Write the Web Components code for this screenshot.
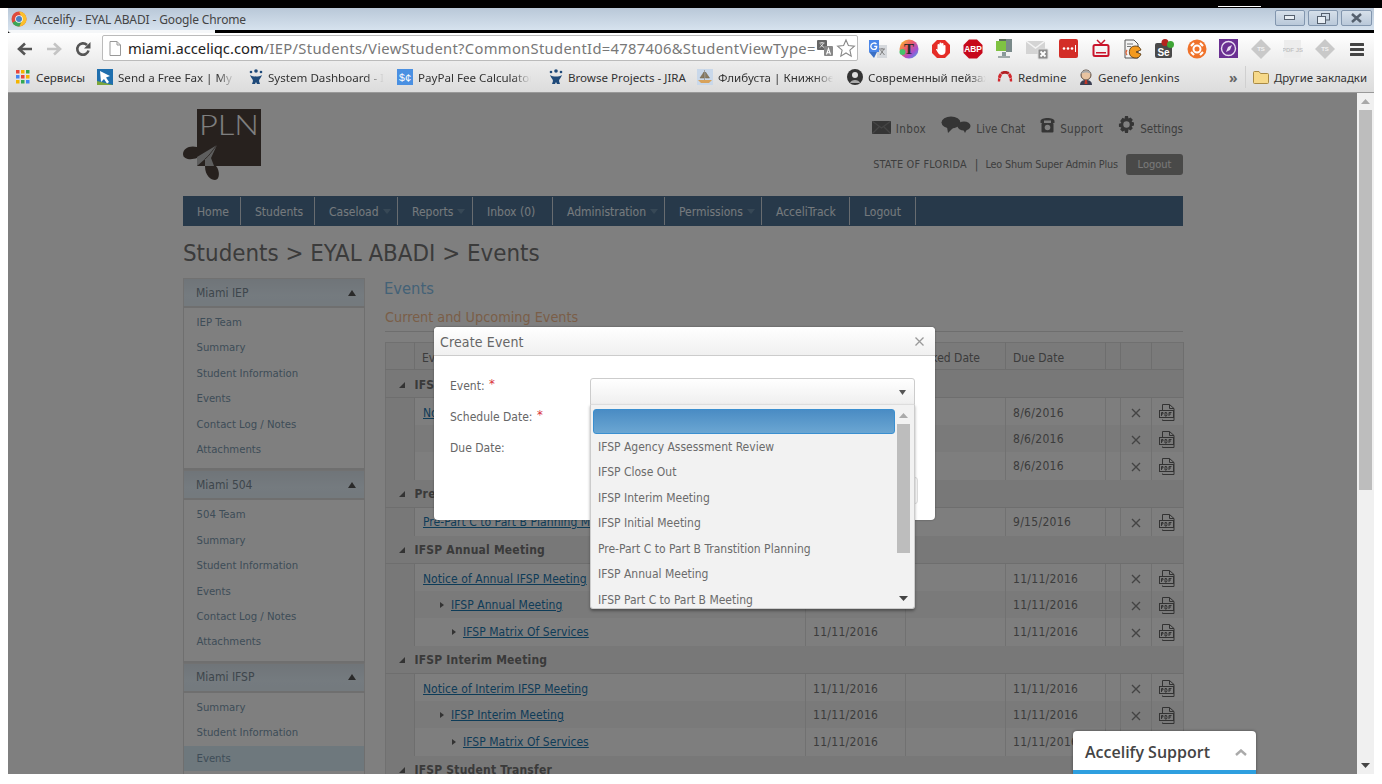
<!DOCTYPE html>
<html lang="en"><head><meta charset="utf-8"><title>Accelify - EYAL ABADI - Google Chrome</title>
<style>
html,body{margin:0;background:#fff;overflow:hidden}
body{font-family:"DejaVu Sans Condensed","DejaVu Sans",sans-serif;font-stretch:condensed;width:1382px;height:784px}
</style></head><body>
<browser-window>
  <chrome-bar slot="chrome"></chrome-bar>
  <site-page>
    <page-header slot="head"></page-header>
    <main-nav slot="head"></main-nav>
    <side-panel slot="side" title="Miami IEP"><side-link>IEP Team</side-link><side-link>Summary</side-link><side-link>Student Information</side-link><side-link>Events</side-link><side-link>Contact Log / Notes</side-link><side-link>Attachments</side-link></side-panel>
    <side-panel slot="side" title="Miami 504"><side-link>504 Team</side-link><side-link>Summary</side-link><side-link>Student Information</side-link><side-link>Events</side-link><side-link>Contact Log / Notes</side-link><side-link>Attachments</side-link></side-panel>
    <side-panel slot="side" title="Miami IFSP"><side-link>Summary</side-link><side-link>Student Information</side-link><side-link active>Events</side-link></side-panel>
    <events-table slot="main"></events-table>
  </site-page>
  <modal-backdrop slot="over"><create-event></create-event></modal-backdrop>
  <support-widget slot="over"></support-widget>
  <page-scrollbar slot="bar"></page-scrollbar>
</browser-window>
<script>
const def=(name,css,html)=>customElements.define(name,class extends HTMLElement{
  connectedCallback(){ if(this.shadowRoot)return;
    this.attachShadow({mode:'open'}).innerHTML=`<style>${css}</style>`+(typeof html==='function'?html(this):html);}
});
const svg=(w,h,body,extra='')=>`<svg xmlns="http://www.w3.org/2000/svg" width="${w}" height="${h}" viewBox="0 0 ${w} ${h}" ${extra}>${body}</svg>`;

/* ---------- browser shell ---------- */
def('browser-window',`
 :host{display:block;width:1382px;height:784px;overflow:hidden;background:#fff}
 .top{height:8px;background:#000;display:flex;align-items:flex-end}
 .top i{display:block;margin-left:1218px;width:43px;height:1px;background:#fff;margin-bottom:1px}
 .win{margin:0 8px;height:766px;display:flex;flex-direction:column}
 .view{flex:1;display:flex;min-height:0}
 .page{flex:1;position:relative;overflow:hidden;min-width:0}
`,`<div class="top"><i></i></div><div class="win"><slot name="chrome"></slot>
  <div class="view"><div class="page"><slot></slot><slot name="over"></slot></div><slot name="bar"></slot></div></div>`);

const winBtn=(g,c='')=>`<span class="wb ${c}">${g}</span>`;
const ICONS=[
 svg(20,20,`<rect x="10" y="6" width="10" height="13" fill="#d5d8dc"/><path d="M2 1h10v12H2z" fill="#4a86e8"/><path d="M2 13h8l-3 6z" fill="#3a6fc4"/><path d="M9.500 5.200A3.200 3.200 0 107.200 10.400c1.500 0 2.500-1 2.500-3H7.200" fill="none" stroke="#fff" stroke-width="1.300"/><path d="M12 10h6M15 9v1M13 16l4-6M13.500 11l4 5" stroke="#777" stroke-width=".9"/>`),
 svg(20,20,`<defs><linearGradient id="rb" x1="0" y1="0" x2="1" y2="1"><stop offset="0" stop-color="#f3d21f"/><stop offset=".4" stop-color="#ef5b6a"/><stop offset=".7" stop-color="#a34fd0"/><stop offset="1" stop-color="#2fb7e8"/></linearGradient></defs><circle cx="10" cy="10" r="9.500" fill="url(#rb)"/><circle cx="3.500" cy="13" r="3" fill="#45c46b"/><text x="10" y="15.200" text-anchor="middle" font-size="15" font-weight="700" fill="#2b2b2b" font-family="Liberation Serif">T</text>`),
 svg(20,20,`<path d="M6 1h8l5 5v8l-5 5H6l-5-5V6z" fill="#e52d27"/><path d="M6.500 11V6a1 1 0 012 0V4.500a1 1 0 012 0V5a1 1 0 012 0v2a1 1 0 012 0v5c0 2.500-1.500 4-4 4-2 0-3-1-4-3L5 10.500c.300-.800 1.500-.500 1.500.500z" fill="#fff"/>`),
 svg(20,20,`<path d="M6 .5h8L19.500 6v8L14 19.500H6L.5 14V6z" fill="#c7081b"/><text x="10" y="13.300" text-anchor="middle" font-size="8.400" font-weight="700" fill="#fff" font-family="Liberation Sans">ABP</text>`),
 svg(20,20,`<g transform="translate(-3 0)"><rect x="7" y="0" width="9" height="2" fill="#5a6a5a"/><rect x="4" y="2" width="14" height="10" fill="#7fc241"/><path d="M14 0h6v13h-6z" fill="#7a8a8a"/><rect x="10" y="13" width="4" height="4" fill="#8a9a9a"/><rect x="6" y="17" width="12" height="2" fill="#a0aaaa"/></g>`),
 svg(24,22,`<rect x="1" y="3" width="19" height="13" fill="#d4d4d4"/><path d="M1 3l9.500 7L20 3" fill="none" stroke="#f4f4f4" stroke-width="1.500"/><rect x="13" y="11" width="10" height="10" rx="1" fill="#8c8c8c" stroke="#ddd"/><path d="M15.500 13.500l5 5m0-5l-5 5" stroke="#fff" stroke-width="1.800"/>`),
 svg(20,20,`<rect x="0" y="0" width="19" height="19" rx="2" fill="#d32d27"/><circle cx="5" cy="9.500" r="1.300" fill="#fff"/><circle cx="9" cy="9.500" r="1.300" fill="#fff"/><circle cx="13" cy="9.500" r="1.300" fill="#fff"/><rect x="16" y="6" width="1" height="7" fill="#fff"/>`),
 svg(20,20,`<path d="M6 1l4 4 4-4" fill="none" stroke="#c9142b" stroke-width="1.500"/><rect x="2.500" y="6" width="15" height="11" rx="1.500" fill="none" stroke="#c9142b" stroke-width="2"/><rect x="5" y="13" width="10" height="1.500" fill="#c9142b"/>`),
 svg(20,20,`<path d="M2 1h9l4 4v14H2z" fill="#f4f4f4" stroke="#555"/><path d="M4 5h6M4 7.500h4" stroke="#777"/><path d="M4 11a4 4 0 000 5" fill="none" stroke="#e0673a" stroke-width="1.300"/><path d="M12 7a6 6 0 106 8l-5-2 5-2a6 6 0 00-6-4z" fill="#f39a1f" stroke="#4a3010" stroke-width=".8"/>`),
 svg(20,20,`<rect x="0" y="4" width="17" height="15" rx="2" fill="#4a4a4a"/><text x="8.500" y="16.500" text-anchor="middle" font-size="10" font-weight="700" fill="#fff" font-family="Liberation Sans">Se</text><circle cx="10" cy="3.500" r="3.500" fill="#b5241e"/><circle cx="15.500" cy="5.500" r="3.500" fill="#3fa535"/>`),
 svg(20,20,`<circle cx="10" cy="10" r="9.500" fill="#f0722a"/><circle cx="10" cy="10" r="3.500" fill="none" stroke="#fff" stroke-width="2"/><path d="M4 7l3-3M13 4l3 3M16 13l-3 3M7 16l-3-3" stroke="#fff" stroke-width="2.200"/>`),
 svg(20,20,`<rect width="19" height="19" fill="#6a2f92"/><circle cx="9.500" cy="9.500" r="7" fill="none" stroke="#e8dcf0" stroke-width="1.400"/><path d="M13 6L11 11l-4 2 2-5z" fill="#e8dcf0"/>`),
 svg(20,20,`<path d="M10 0l10 10-10 10L0 10z" fill="#c9c9c9"/><text x="10" y="12.300" text-anchor="middle" font-size="6" font-weight="700" fill="#f2f2f2" font-family="Liberation Sans">TS</text>`),
 svg(20,20,`<rect x="1" y="1" width="17" height="18" fill="#ededed"/><text x="9.500" y="12.500" text-anchor="middle" font-size="6" font-weight="700" fill="#c4c4c4" font-family="Liberation Sans">PDF JS</text>`),
 svg(20,20,`<path d="M10 0l10 10-10 10L0 10z" fill="#c9c9c9"/><text x="10" y="12.300" text-anchor="middle" font-size="6" font-weight="700" fill="#f2f2f2" font-family="Liberation Sans">TS</text>`),
 svg(16,16,`<rect x="1" y="2" width="14" height="3" rx=".5" fill="#444"/><rect x="1" y="7" width="14" height="3" rx=".5" fill="#444"/><rect x="1" y="12" width="14" height="3" rx=".5" fill="#444"/>`)
];
const ATL=`<circle cx="8" cy="2" r="1.800" fill="#1f4a7a"/><circle cx="3" cy="3" r="1.300" fill="#1f4a7a"/><circle cx="13" cy="3" r="1.300" fill="#1f4a7a"/><path d="M2 6c3 2 9 2 12 0-1 3-3 4-3 6l1 3H9l-1-2-1 2H4l1-3c0-2-2-3-3-6z" fill="#1f4a7a"/>`;
const BM=[
 ['Сервисы',81,0,svg(14,15,[0,5,10].map(y=>[0,5,10].map(x=>`<rect x="${x}" y="${y}" width="3.500" height="3.500" fill="${['#e8453c','#f4b400','#34a853','#4285f4','#e8453c','#f4b400','#f4b400','#34a853','#4285f4'][y/5*3+x/5]}"/>`).join('')).join('')),20],
 ['Send a Free Fax | My F',151,117,svg(16,16,`<rect width="16" height="16" fill="#1f6fae"/><path d="M0 12l16 4H0z" fill="#7da63b"/><path d="M3 2l10 5-4 1.500L12 13l-2 1.500L7 10l-3 3z" fill="#fff"/>`),21],
 ['System Dashboard - I',149,116,svg(16,16,ATL),20],
 ['PayPal Fee Calculator',151,113,svg(16,16,`<rect width="16" height="16" fill="#4a90e2"/><text x="8" y="12" text-anchor="middle" font-size="10.500" fill="#fff" font-family="Liberation Mono">$¢</text>`),21],
 ['Browse Projects - JIRA',149,0,svg(16,16,ATL),20],
 ['Флибуста | Книжное',150,115,svg(16,16,`<rect width="16" height="16" fill="#c9d8ea"/><path d="M7.500 1v10M3 9l4-6v6zM8.500 3l4 6h-4z" fill="#8a7b60" stroke="#6d6048" stroke-width=".5"/><path d="M1 11h14l-3 3H4z" fill="#d8a25a"/>`),21],
 ['Современный пейзаж',150,118,svg(16,16,`<circle cx="8" cy="8" r="8" fill="#333"/><circle cx="8" cy="6" r="3" fill="#ddd"/><path d="M3 14c1-4 9-4 10 0z" fill="#aaa"/>`),21],
 ['Redmine',81,0,svg(16,16,`<path d="M5 5.500L3.500 3.500C5 1.500 11 1.500 12.500 3.500L11 5.500C9.500 4.500 6.500 4.500 5 5.500z" fill="#b32024"/><path d="M3 4L5 6 3.500 9.500 1 8.500C1 7 2 5 3 4zM13 4l-2 2 1.500 3.500 2.500-1C15 7 14 5 13 4z" fill="#d2282e"/><path d="M1 9l2.400 1-.3 2.500H.8zM15 9l-2.400 1 .3 2.500h2.300z" fill="#d2282e"/>`),21],
 ['Genefo Jenkins',150,0,svg(16,16,`<circle cx="8" cy="6" r="5" fill="#e8c3a0" stroke="#5a4a40"/><path d="M3 5c1-5 9-5 10 0-3-2-7-2-10 0z" fill="#a9a9a9"/><path d="M2 16c0-4 3-5 6-5s6 1 6 5z" fill="#3b3f52"/><path d="M7 11h2l.500 4h-3z" fill="#c0392b"/>`),20]
];
def('chrome-bar',`
 :host{display:block;font-family:"Noto Sans","Open Sans",sans-serif;font-stretch:normal}
 .title{height:22px;background:linear-gradient(#b9c8d8,#d6e2ee);display:flex;align-items:center;padding:0 2px 0 3px;color:#444;font-size:12px}
 .logo{margin-right:7px;display:flex}
 .ttl{flex:1;letter-spacing:-.135px;font-size:12px}
 .wbs{display:flex;gap:3px;margin-top:-2px}
 .wb{width:28px;height:14px;border:1px solid #8296ae;border-radius:2px;background:linear-gradient(#d6e0ea,#b9c8d9);display:flex;align-items:center;justify-content:center}
 .wb.w{width:29px}
 .strip{height:3px;background:#000;display:flex}
 .strip b{display:block;width:207px;background:#f5f7f9;border-radius:0 0 0 3px}
 .tools{background:linear-gradient(#fff,#e8e8e8 62%,#dcdcdc);border-bottom:1px solid #999}
 .tb{height:31px;display:flex;align-items:center;position:relative}
 .nav{width:94px;display:flex;align-items:center;gap:13px;padding-left:9px;box-sizing:border-box}
 .url{width:756px;height:26px;margin-top:-1px;box-sizing:border-box;border:1px solid #bbb;border-radius:2px;background:#fff;display:flex;align-items:center;padding:0 1px 0 6px;font-size:14.750px;white-space:nowrap;color:#777;overflow:hidden}
 .url b{font-weight:400;color:#222}
 .url .rest{letter-spacing:.31px}
 .url .txt{flex:1;min-width:0;margin-left:7px;overflow:hidden}
 .url svg{flex:none}
 .ext{display:grid;grid-template-columns:repeat(16,32px);margin-left:3px}
 .ext span{display:flex;align-items:center;justify-content:center;height:24px}
 .bm{height:28px;display:flex;align-items:center;padding:0 0 2px 8px;box-sizing:border-box}
 .more{margin-left:auto;display:flex;align-items:center;font-size:11.400px;color:#333}
 .more .chev{color:#666;font-weight:700;font-size:14px;width:17px;margin-left:-4px}
 .more .sep{width:1px;height:22px;background:#d0d0d0;margin:0 7px 0 -1px}
 .more svg{margin-right:5px}
 .more .t{width:100px;white-space:nowrap}
`,`<div class="title"><span class="logo">${svg(16,16,`<circle cx="8" cy="8" r="7.500" fill="#de4b3d"/><path d="M8 8L1.500 11.700A7.500 7.500 0 008.500 15.500L12 8z" fill="#3aa757"/><path d="M8 .5A7.500 7.500 0 0114.500 4.200 7.500 7.500 0 018.500 15.500L11.500 8z" fill="#fbc02d"/><circle cx="8" cy="8" r="3.800" fill="#fff"/><circle cx="8" cy="8" r="3" fill="#4a80c2"/>`)}</span>
  <span class="ttl">Accelify - EYAL ABADI - Google Chrome</span>
  <span class="wbs">${winBtn(svg(12,6,`<rect x=".5" y=".5" width="10" height="4" fill="#e8eef4" stroke="#55606e"/>`))}${winBtn(svg(13,11,`<rect x="4.500" y=".5" width="8" height="6.500" fill="none" stroke="#55606e" stroke-width="1"/><rect x=".5" y="3.500" width="8" height="7" fill="#e8eef4" stroke="#55606e"/>`))}${winBtn(svg(13,10,`<path d="M2 1l9 8M11 1L2 9" stroke="#55606e" stroke-width="2.500"/>`),'w')}</span></div>
 <div class="strip"><b></b></div>
 <div class="tools">
  <div class="tb">
   <div class="nav">
    ${svg(16,14,`<path d="M15 7H3M8 1.500L2 7l6 5.500" fill="none" stroke="#555" stroke-width="2.600"/>`)}
    ${svg(16,14,`<path d="M1 7h12M8 1.500L14 7l-6 5.500" fill="none" stroke="#c4c4c4" stroke-width="2.600"/>`)}
    ${svg(16,16,`<path d="M13.500 9.500A5.700 5.700 0 1112 4" fill="none" stroke="#555" stroke-width="2.600"/><path d="M15.500 1v6.500H9z" fill="#555"/>`)}
   </div>
   <div class="url">
    ${svg(12,15,`<path d="M1 .5h7l3.500 3.500v10.500H1z" fill="#fff" stroke="#999"/><path d="M8 .5V4h3.500" fill="none" stroke="#999"/>`)}
    <span class="txt"><b>miami.acceliqc.com</b><span class="rest">/IEP/Students/ViewStudent?CommonStudentId=4787406&amp;StudentViewType=</span></span>
    ${svg(16,16,`<rect x="0" y="0" width="10" height="10" rx="1" fill="#666"/><path d="M2.500 3h5M5 2v1M3 7.500L6.500 3.500M3.500 4.500L7 7.500" stroke="#fff" stroke-width=".8"/><rect x="7" y="6" width="9" height="10" rx="1" fill="#888"/><path d="M9.500 14.500l2-6 2 6M10.200 12.800h2.600" fill="none" stroke="#fff" stroke-width="1.100"/>`)}
    <span style="width:3px;flex:none"></span>
    ${svg(20,20,`<path d="M10 2l2.400 5.500 6 .6-4.500 4 1.300 6L10 15l-5.200 3.100 1.300-6-4.500-4 6-.6z" fill="#fff" stroke="#888" stroke-width="1.100"/>`)}
   </div>
   <div class="ext">${ICONS.map(i=>`<span>${i}</span>`).join('')}</div>
  </div>
  <div class="bm">
   ${BM.map(([t,w,f,ic,iw])=>`<book-mark style="width:${w}px"><span slot="icon" style="display:flex;width:${iw}px">${ic}</span><span class="lbl" style="${f?`-webkit-mask-image:linear-gradient(90deg,#000 ${f-18}px,transparent ${f}px);`:''}">${t}</span></book-mark>`).join('')}
   <div class="more"><span class="chev">»</span><span class="sep"></span>${svg(16,14,`<path d="M.5 2.500a1 1 0 011-1H6l1.500 2h7a1 1 0 011 1v8a1 1 0 01-1 1h-13a1 1 0 01-1-1z" fill="#f6d98a" stroke="#a88a45"/>`)}<span class="t">Другие закладки</span></div>
  </div>
 </div>`);
def('book-mark',`
 :host{display:flex;align-items:center;flex:none;font-family:"Noto Sans",sans-serif;font-size:11.600px;color:#333;height:24px}
 .i{flex:none;display:flex;align-items:center}
 ::slotted(.lbl){display:block;white-space:nowrap}
`,`<span class="i"><slot name="icon"></slot></span><slot></slot>`);

def('page-scrollbar',`
 :host{display:flex;flex-direction:column;align-items:center;width:17px;background:#f0f0f0;flex:none}
 .a{height:17px;display:flex;align-items:center;justify-content:center;flex:none}
 .t{width:13px;height:380px;background:#bdbdbd;flex:none}
 .f{flex:1}
`,`<div class="a">${svg(9,5,`<path d="M4.500 0L9 5H0z" fill="#a8a8a8"/>`)}</div><div class="t"></div><div class="f"></div><div class="a" style="padding-top:2px">${svg(9,5,`<path d="M0 0h9L4.500 5z" fill="#444"/>`)}</div>`);

/* ---------- site ---------- */
def('site-page',`
 :host{display:block;width:1000px;margin-left:175px;color:#777}
 h1{margin:0;height:52px;line-height:55px;font-weight:400;font-size:23.850px;color:#767676;white-space:nowrap}
 .cols{display:flex;gap:20px}
 aside{width:182px;flex:none}
 section{flex:1;min-width:0}
`,`<slot name="head"></slot><h1>Students &gt; EYAL ABADI &gt; Events</h1>
 <div class="cols"><aside><slot name="side"></slot></aside><section><slot name="main"></slot></section></div>`);

def('page-header',`
 :host{display:flex;height:103px;justify-content:space-between;box-sizing:border-box;padding-top:15px}
 .right{display:flex;flex-direction:column;align-items:flex-end;font-size:11.600px;color:#7c7c7c;padding-top:4px}
 .links{display:flex;height:30px;align-items:center}
 .links a{display:flex;align-items:center;margin-left:15px;color:#7c7c7c}
 .links a svg{margin-right:5px;margin-top:-5px}
 .links a svg.m{margin-top:1px}
 .links span{padding-top:3px}
 .user{display:flex;align-items:center;font-size:10.800px;margin-top:12px;height:21px}
 .user em{font-style:normal;margin:0 7px 0 8px;font-size:12px}
 .user .s{letter-spacing:.2px}.user .l{letter-spacing:-.16px}
 .btn{margin-left:8px;width:57px;height:21px;background:#939290;border-radius:3px;color:#f2f2f2;display:flex;align-items:center;justify-content:center;font-size:11px}
`,`<div class="logo">${svg(80,74,`
   <rect x="14" y="1" width="64" height="57" fill="#4e433d"/>
   <text x="16" y="27" font-family="Lato,'Open Sans'" font-size="27" font-weight="300" fill="#fff" textLength="60" lengthAdjust="spacingAndGlyphs">PLN</text>
   <path d="M14 39C6 37 0 41 0 46c0 6 9 6 14 4z" fill="#4e433d"/>
   <path d="M22 58c0 10 6 14 10 14 5 0 5-10 1-14z" fill="#4e433d"/>
   <path d="M34 37L14 49v9l8-7v7h9l-3-8z" fill="#bdbdbd"/>
   <path d="M34 37c-5 6-8 11-12 14" fill="none" stroke="#4e433d" stroke-width=".8"/>`)}</div>
 <div class="right">
  <div class="links">
   <a>${svg(19,13,`<rect width="19" height="13" fill="#6a6a6a"/><path d="M0 0l9.500 7L19 0M0 13l7-7M19 13l-7-7" fill="none" stroke="#8a8a8a" stroke-width="1.300"/>`,'class="m"')}<span style="letter-spacing:.4px">Inbox</span></a>
   <a>${svg(30,17,`<ellipse cx="10" cy="6.500" rx="9.500" ry="6" fill="#6a6a6a"/><path d="M6 11l1 6 5-5z" fill="#6a6a6a"/><ellipse cx="23" cy="10" rx="6.500" ry="4.500" fill="#6a6a6a"/><path d="M22 13l2 4 2-4z" fill="#6a6a6a"/>`)}<span>Live Chat</span></a>
   <a>${svg(15,17,`<path d="M.5 5C.5 1 14.500 1 14.500 5v2h-3.500V4.500H4V7H.5z" fill="#6a6a6a"/><rect x="1.500" y="7" width="12" height="9.500" rx="1" fill="#6a6a6a"/><circle cx="7.500" cy="11.500" r="2.800" fill="#fff"/>`)}<span style="letter-spacing:.25px">Support</span></a>
   <a>${svg(17,17,`<path fill="#6a6a6a" d="M7 0h3l.5 2.500 2-1 2.300 2.300-1.200 2 2.400.7v3l-2.400.700 1.200 2-2.300 2.300-2-1.200L10 17H7l-.5-2.500-2 1.200-2.300-2.300 1.200-2L.9 10.700v-3l2.500-.7-1.200-2L4.500 1.800l2 1z"/><circle cx="8.500" cy="8.500" r="3.200" fill="#fff"/>`)}<span>Settings</span></a>
  </div>
  <div class="user"><span class="s">STATE OF FLORIDA</span><em>|</em><span class="l">Leo Shum Super Admin Plus</span><span class="btn">Logout</span></div>
 </div>`);

const NAV=[['Home',58],['Students',74],['Caseload',83,1],['Reports',75,1],['Inbox (0)',80],['Administration',112,1],['Permissions',97,1],['AcceliTrack',88],['Logout',66]];
def('main-nav',`
 :host{display:flex;height:30px;background:#4f7394;color:#fff;font-size:12px}
 a{box-sizing:border-box;display:flex;align-items:center;padding:1px 0 0 14px;border-right:1px solid #d0d8e0;margin:1px 0;white-space:nowrap;color:#eaf2fa}
 a i{margin-left:4px;width:0;height:0;border:4px solid transparent;border-top:5px solid #6f90ac;margin-top:4px}
`,NAV.map(([t,w,d])=>`<a style="width:${w}px">${t}${d?'<i></i>':''}</a>`).join(''));

def('side-panel',`
 :host{display:block;font-size:11.250px}
 .h{height:28px;box-sizing:border-box;border:1px solid #e2e2e2;border-bottom:none;background:linear-gradient(#e0eaf2,#eaf6ff 60%,#e8f4fc);display:flex;align-items:center;justify-content:space-between;padding:0 8px 0 12px;font-size:12px;color:#7c8c98}
 .h i{width:0;height:0;border:4px solid transparent;border-top:none;border-bottom:6px solid #555}
 .b{border:2px solid #dfdfdf;border-left-width:1.500px;border-right-width:1.500px;padding:2px 0 6.100px;background:#fff}
`,el=>`<div class="h"><span>${el.getAttribute('title')}</span><i></i></div><div class="b"><slot></slot></div>`);
def('side-link',`
 :host{display:block;height:25.400px;line-height:25.400px;padding-left:12.500px;color:#7c9ab0;white-space:nowrap}
 :host([active]){background:#dcf0fa}
`,`<slot></slot>`);

const ico={x:svg(10,10,`<path d="M1 1l8 8M9 1L1 9" stroke="#888" stroke-width="1.400"/>`),
 pdf:svg(16,17,`<path d="M3.500 6V.5h7l4.500 4v12H3.500v-1" fill="none" stroke="#666"/><path d="M10.500.5v4H15" fill="none" stroke="#666"/><rect x=".5" y="6.500" width="14" height="7" fill="none" stroke="#666"/><path d="M2.500 12V8.500h1.500v1.500H2.500M6 8.500V12h1.500l.5-1.500-.5-2zM10 12V8.500h2.500M10 10h2" fill="none" stroke="#666"/>`)};
const row=(lvl,t,sd,dd,alt)=>`<tr class="r l${lvl} ${alt?'alt':''}"><td class="gut"></td><td class="name">${t?(lvl?`<i class="tri"></i>`:'')+`<a>${t}</a>`:''}</td><td class="d">${sd}</td><td></td><td class="d">${dd}</td><td></td><td class="c">${ico.x}</td><td class="c">${ico.pdf}</td></tr>`;
const grp=t=>`<tr class="g"><td class="gut"><i class="dn"></i></td><td colspan="7"><b>${t}</b></td></tr>`;
def('events-table',`
 :host{display:block;font-size:12px;color:#787878}
 h2{margin:0;font-weight:400;font-size:16.400px;line-height:22px;height:20px;color:#88c4ee;margin-left:-1px}
 h3{margin:9px 0 10px;font-weight:400;font-size:14.300px;height:25px;line-height:20px;color:#f5bd90;border-bottom:1px solid #ddd;box-sizing:border-box}
 table{width:798px;border-collapse:collapse;table-layout:fixed;border:1px solid #e0e0e0;font-size:12px}
 th{height:27px;padding:3px 7px 0;font-weight:400;text-align:left;background:#f4f4f4;border-right:1px solid #dcdcdc;border-bottom:1px solid #dcdcdc;color:#787878;box-sizing:border-box}
 td{padding:0 7px;height:27px;box-sizing:border-box;border-right:1px solid #e2e2e2;white-space:nowrap;overflow:hidden}
 td.d{letter-spacing:.3px}
 tr.r td{background:#fdfdfd}
 tr.r.alt td{background:#f5f5f5}
 tr.r td.gut,tr.g td{background:#f0f0f0;border-right:none}
 tr.r td.gut{border-right:1px solid #dcdcdc}
 tr.g td{height:28px;border-bottom:1px solid #dcdcdc;padding:2px 0 0;color:#747474}
 tr.g b{font-weight:700;letter-spacing:.2px}
 tr.l0 td{padding-top:3px}
 tr.l1 td{padding-top:2px}
 tr.l2 td{padding-top:1px;height:28px}
 td.c{padding-left:0;padding-right:0;text-align:center}td.c svg{vertical-align:middle}
 td.c:last-child svg{margin-right:2px}
 td.name a{letter-spacing:.05px}
 tr.l0 td.name{padding-left:8px}
 tr.l1 td.name{padding-left:25px}
 tr.l2 td.name{padding-left:37px}
 a{color:#1d78b0;text-decoration:underline}
 .tri{display:inline-block;width:0;height:0;border:3px solid transparent;border-left:4px solid #666;border-right:0;margin-right:7px;vertical-align:1px}
 .dn{display:block;width:0;height:0;margin-left:13px;border-bottom:6px solid #666;border-left:6px solid transparent}
`,`<h2>Events</h2><h3>Current and Upcoming Events</h3>
 <table><colgroup><col style="width:29px"><col style="width:391px"><col style="width:100px"><col style="width:100px"><col style="width:100px"><col style="width:15px"><col style="width:31px"><col style="width:32px"></colgroup>
 <tr><th></th><th>Event</th><th></th><th>Locked Date</th><th>Due Date</th><th></th><th></th><th></th></tr>
 ${grp('IFSP Initial Meeting')}
 ${row(0,'Notice of Initial IFSP Meeting','','8/6/2016',0)}${row(1,'','','8/6/2016',1)}${row(2,'','','8/6/2016',0)}
 ${grp('Pre-Part C to Part B Planning Meeting')}
 ${`<tr class="r l2 x"><td class="gut"></td><td class="name" style="padding-left:8px"><a>Pre-Part C to Part B Planning Meeting</a></td><td></td><td></td><td class="d">9/15/2016</td><td></td><td class="c">${ico.x}</td><td class="c">${ico.pdf}</td></tr>`}
 ${grp('IFSP Annual Meeting')}
 ${row(0,'Notice of Annual IFSP Meeting','','11/11/2016',0)}${row(1,'IFSP Annual Meeting','','11/11/2016',1)}${row(2,'IFSP Matrix Of Services','11/11/2016','11/11/2016',0)}
 ${grp('IFSP Interim Meeting')}
 ${row(0,'Notice of Interim IFSP Meeting','11/11/2016','11/11/2016',0)}${row(1,'IFSP Interim Meeting','11/11/2016','11/11/2016',1)}${row(2,'IFSP Matrix Of Services','11/11/2016','11/11/2016',0)}
 ${grp('IFSP Student Transfer')}
 </table>`);

/* ---------- overlays ---------- */
def('modal-backdrop',`:host{position:absolute;inset:0;background:rgba(0,0,0,.5);display:block}`,`<slot></slot>`);
const OPTS=['IFSP Agency Assessment Review','IFSP Close Out','IFSP Interim Meeting','IFSP Initial Meeting','Pre-Part C to Part B Transtition Planning','IFSP Annual Meeting','IFSP Part C to Part B Meeting'];
def('create-event',`
 :host{position:absolute;left:426px;top:234px;width:501px;height:193px;background:#fff;border-radius:4px;font-size:12px;color:#666;box-sizing:border-box;box-shadow:0 0 2px rgba(0,0,0,.4)}
 .hd{height:29px;box-sizing:border-box;border-bottom:1px solid #ccc;background:linear-gradient(#fff,#f0f0f0);border-radius:4px 4px 0 0;display:flex;align-items:center;justify-content:space-between;padding:1px 11px 0 6px;font-size:14px;color:#666;letter-spacing:.15px}
 .bd{padding:21px 19px 0 16px;display:grid;grid-template-columns:140px 1fr;grid-auto-rows:31px}
 .lb{line-height:20px;margin-top:-1px}
 .lb b{color:#d9303a;font-weight:400;margin-left:1px;font-size:13px;line-height:1;vertical-align:2px}
 .sel{position:absolute;left:156px;top:51px;width:325px;height:27px;box-sizing:border-box;border:1px solid #ccc;border-radius:3px 3px 0 0;background:linear-gradient(#fff,#efefef);display:flex;align-items:center;justify-content:flex-end;padding:2px 8px 0}
 .drop{position:absolute;left:156px;top:77px;width:325px;height:205px;box-sizing:border-box;border:1px solid #ccc;border-top:1px solid #ddd;border-radius:0 0 3px 3px;background:#f2f2f2;box-shadow:0 2px 3px rgba(0,0,0,.35);overflow:hidden;padding:4px 0 0 2px;z-index:2}
 .hi{width:302px;height:25px;margin-bottom:.6px;box-sizing:border-box;border:1px solid #3a8fd0;border-radius:3px;background:linear-gradient(#4a8cc4,#6ba6d2)}
 .o{height:25.500px;line-height:25.500px;padding-left:5px;white-space:nowrap;color:#6b6b6b}
 .sb{position:absolute;right:3px;top:0;bottom:0;width:15px;display:flex;flex-direction:column;align-items:center;line-height:0}
 .sb .th{width:13px;height:129px;background:#bdbdbd;margin-top:6px;flex:none}
 .sb .up{margin-top:8px;height:5px;flex:none}
 .sb .down{position:absolute;bottom:7px;height:5px}
 .peek{position:absolute;left:470px;top:150px;width:12px;height:25px;border:1px solid #ddd;border-radius:3px;background:#fafafa}
`,`<div class="hd"><span>Create Event</span>${svg(9,9,`<path d="M.5.5l8 8M8.500.5l-8 8" stroke="#999" stroke-width="1.300"/>`)}</div>
 <div class="bd"><div class="lb">Event: <b>*</b></div><div></div><div class="lb">Schedule Date: <b>*</b></div><div></div><div class="lb">Due Date:</div><div></div></div>
 <div class="peek"></div>
 <div class="sel">${svg(7,5,`<path d="M0 0h7L3.500 5z" fill="#555"/>`)}</div>
 <div class="drop"><div class="hi"></div>${OPTS.map(o=>`<div class="o">${o}</div>`).join('')}
  <div class="sb"><div class="up">${svg(9,5,`<path d="M4.500 0L9 5H0z" fill="#aaa"/>`)}</div><div class="th"></div><div class="down">${svg(9,5,`<path d="M0 0h9L4.500 5z" fill="#444"/>`)}</div></div></div>`);

def('support-widget',`
 :host{position:absolute;left:1065px;bottom:0;width:183px;height:43px;box-sizing:border-box;background:#fff;border-radius:4px 4px 0 0;box-shadow:0 0 3px rgba(0,0,0,.45);border-bottom:4px solid #2e9fdf;display:flex;align-items:center;justify-content:space-between;padding:3px 9px 0 12px;font-family:"Open Sans",sans-serif;font-stretch:normal;font-size:16px;font-weight:600;color:#444}
`,`<span>Accelify Support</span>${svg(12,7,`<path d="M1 6l5-4.500L11 6" fill="none" stroke="#aaa" stroke-width="2.400"/>`)}`);
</script>
</body></html>
